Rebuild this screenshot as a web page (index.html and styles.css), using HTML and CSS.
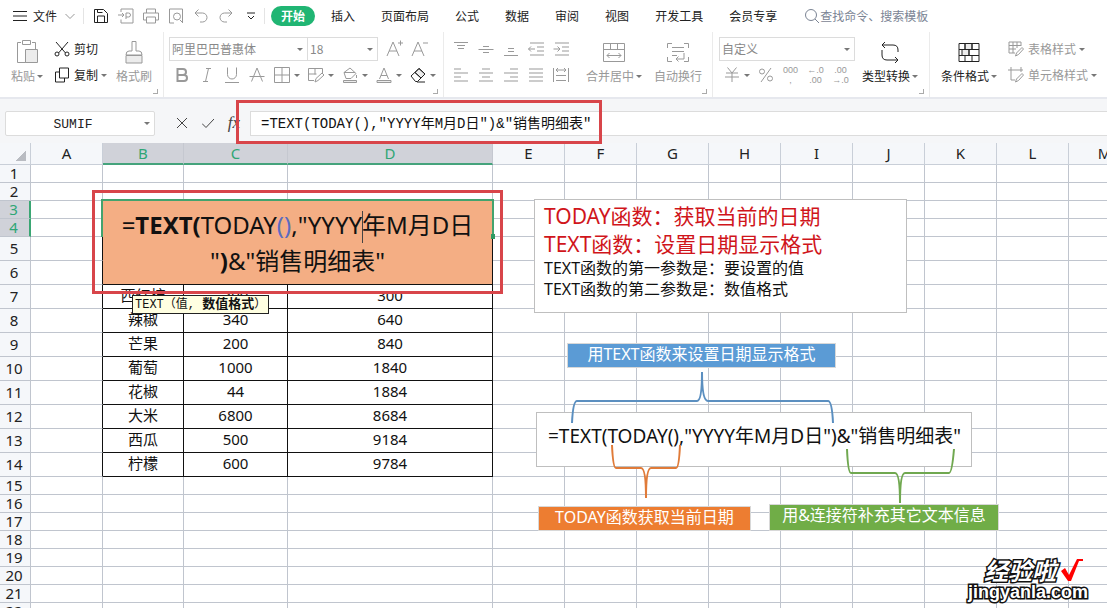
FILE: index.html
```html
<!DOCTYPE html>
<html lang="zh-CN">
<head>
<meta charset="utf-8">
<title>SUMIF</title>
<link rel="stylesheet" href="styles.css">
</head>
<body>
<div class="app">
  <header class="menubar">
    <button class="file-btn"><svg class="i16" viewBox="0 0 16 16"><path d="M1 3.500h14M1 8h14M1 12.500h14"/></svg><span>文件</span><svg class="i12 faded" viewBox="0 0 12 12"><path d="M1.500 4l4.500 4.500L10.500 4"/></svg></button>
    <div class="quick">
      <button aria-label="保存" class="dark"><svg class="i16" viewBox="0 0 16 16"><path d="M1.500 1.500h9l4 4v9h-13zM4.500 14V8h7v6M4.500 1.500V4.500h5"/></svg></button>
      <button aria-label="输出为PDF"><svg class="i16" viewBox="0 0 16 16"><path d="M3 4V1h12v14H3v-3.500M0 7h6M4 5l2 2-2 2M8 11V5h2.500a2 2 0 0 1 0 4H8"/></svg></button>
      <button aria-label="打印"><svg class="i16" viewBox="0 0 16 16"><path d="M3.500 5V1h9v4M3.500 12H.5V5h15v7h-3M3.500 9h9v6h-9z"/></svg></button>
      <button aria-label="打印预览"><svg class="i16" viewBox="0 0 16 16"><path d="M6 15H1.500V1h13v14M12 12l3 3"/><circle cx="9" cy="8.500" r="3.500"/></svg></button>
      <button aria-label="撤销"><svg class="i16" viewBox="0 0 16 16"><path d="M5.500 1.500L2 5l3.500 3.500M2 5h7.500a4.500 4.500 0 0 1 0 9H7"/></svg></button>
      <button aria-label="恢复"><svg class="i16" viewBox="0 0 16 16"><path d="M10.500 1.500L14 5l-3.500 3.500M14 5H6.500a4.500 4.500 0 0 0 0 9H9"/></svg></button>
      <button aria-label="更多" class="dark"><svg class="i12" viewBox="0 0 12 12"><path d="M2 3h8M3 6l3 3 3-3"/></svg></button>
    </div>
    <nav class="tabs">
      <button class="tab active">开始</button>
      <button class="tab">插入</button>
      <button class="tab">页面布局</button>
      <button class="tab">公式</button>
      <button class="tab">数据</button>
      <button class="tab">审阅</button>
      <button class="tab">视图</button>
      <button class="tab">开发工具</button>
      <button class="tab">会员专享</button>
    </nav>
    <label class="search"><svg class="i16" viewBox="0 0 16 16"><circle cx="7" cy="7" r="5.500"/><path d="M11 11l4 4"/></svg><input type="text" placeholder="查找命令、搜索模板"></label>
  </header>

  <div class="ribbon">
    <section class="group clipboard">
      <button class="big"><svg class="i28" viewBox="0 0 28 28"><path d="M8 4.500H4.500v20H13M19 4.500h3.500V11M9.500 2.500h8v4h-8z"/><path class="fill" d="M12.500 11.500h12v13h-12z"/></svg><span>粘贴<i class="caret"></i></span></button>
      <div class="stack">
        <button class="row-btn dark"><svg class="i16" viewBox="0 0 16 16"><path d="M2 1l9.500 11M14 1L4.500 12"/><circle cx="3" cy="13" r="2"/><circle cx="13" cy="13" r="2"/></svg>剪切</button>
        <button class="row-btn dark"><svg class="i16" viewBox="0 0 16 16"><path d="M5.500 1h9v10h-9zM5.500 5H1.500v10h9v-4"/></svg>复制<i class="caret"></i></button>
      </div>
      <button class="big"><svg class="i28" viewBox="0 0 28 28"><path d="M12 13V3.500h4V13h3q3 0 3 4H6q0-4 3-4z"/><path class="fill" d="M6 17.500h16v7.500H6z"/></svg><span>格式刷</span></button>
      <i class="launcher"></i>
    </section>

    <section class="group font">
      <div class="line">
        <div class="combo font-name"><select aria-label="字体"><option>阿里巴巴普惠体</option></select><i class="caret"></i></div>
        <div class="combo font-size"><select aria-label="字号"><option>18</option></select><i class="caret"></i></div>
        <button class="ico first" aria-label="增大字号"><svg class="i18" viewBox="0 0 18 18"><path d="M2 16L8 2l6 14M4 11h8M13 3h5M15.500.5v5"/></svg></button>
        <button class="ico" aria-label="减小字号"><svg class="i18" viewBox="0 0 18 18"><path d="M2 16L8 2l6 14M4 11h8M13 3h5"/></svg></button>
      </div>
      <div class="line">
        <button class="ico" aria-label="加粗"><svg class="i18" viewBox="0 0 18 18"><path stroke-width="2" d="M4.500 3h5.500a3 3 0 0 1 0 6H4.500zM4.500 9h6.500a3 3 0 0 1 0 6H4.500z"/></svg></button>
        <button class="ico" aria-label="倾斜"><svg class="i18" viewBox="0 0 18 18"><path d="M8 2.500h5M5 15.500h5M10.500 2.500l-3 13"/></svg></button>
        <button class="ico" aria-label="下划线"><svg class="i18" viewBox="0 0 18 18"><path d="M4.500 1.500v7a4.500 4.500 0 0 0 9 0v-7M2 16.500h14"/></svg></button>
        <button class="ico" aria-label="删除线"><svg class="i18" viewBox="0 0 18 18"><path d="M3.500 15.500L9 2l5.500 13.500M1.500 10.500h15"/></svg></button>
        <button class="split" aria-label="边框"><svg class="i18" viewBox="0 0 18 18"><path d="M1.500 1.500h15v15h-15zM9 1.500v15M1.500 9h15"/></svg><i class="caret"></i></button>
        <button class="split" aria-label="绘图边框"><svg class="i18" viewBox="0 0 18 18"><path d="M7 14.500H1.500v-12h14V7M1.500 8h8M8 2.500v6M8 16l1-3.500L15 7l2 2-6 5.500z"/></svg><i class="caret"></i></button>
        <button class="split" aria-label="填充颜色"><svg class="i18" viewBox="0 0 18 18"><path d="M3 6.500L9 2l6 5.500-5 5H5zM3 6.500h11M15.500 9v3"/><path class="fill" d="M2.500 14.500h13v2h-13z"/></svg><i class="caret"></i></button>
        <button class="split" aria-label="字体颜色"><svg class="i18" viewBox="0 0 18 18"><path d="M4.500 13L9 2l4.500 11M6 9.500h6"/><path class="fill" d="M2 14.500h14v2H2z"/></svg><i class="caret"></i></button>
        <button class="split dark" aria-label="清除"><svg class="i18" viewBox="0 0 18 18"><path class="fill" d="M6 6.500L10 2.500 16 8l-4 4z"/><path d="M2 10l8-7.500L16 8l-7.500 7.500H6.500zM6 6.500l6 5.500M8 16h8"/></svg><i class="caret"></i></button>
      </div>
      <i class="launcher"></i>
    </section>

    <section class="group align">
      <div class="stack">
        <div class="line">
          <button class="ico" aria-label="顶端对齐"><svg class="i18" viewBox="0 0 18 18"><path d="M2 2.500h14M5 5.500h8M6 8.500h6"/></svg></button>
          <button class="ico" aria-label="垂直居中"><svg class="i18" viewBox="0 0 18 18"><path d="M6 6.500h6M1.500 9.500h15M6 12.500h6"/></svg></button>
          <button class="ico" aria-label="底端对齐"><svg class="i18" viewBox="0 0 18 18"><path d="M6 8.500h6M6 11.500h6M2 15.500h14"/></svg></button>
          <button class="ico" aria-label="减少缩进"><svg class="i18" viewBox="0 0 18 18"><path d="M3 3h14M10 7h7M10 11h7M3 15h14M1.500 9H8M4 6.500L1.500 9 4 11.500"/></svg></button>
          <button class="ico" aria-label="增加缩进"><svg class="i18" viewBox="0 0 18 18"><path d="M3 3h14M10 7h7M10 11h7M3 15h14M1.500 9H8M5.500 6.500L8 9l-2.500 2.500"/></svg></button>
        </div>
        <div class="line">
          <button class="ico" aria-label="左对齐"><svg class="i18" viewBox="0 0 18 18"><path d="M2 3h7M2 7h14M2 11h7M2 15h14"/></svg></button>
          <button class="ico" aria-label="居中"><svg class="i18" viewBox="0 0 18 18"><path d="M5 3h8M2 7h14M5 11h8M2 15h14"/></svg></button>
          <button class="ico" aria-label="右对齐"><svg class="i18" viewBox="0 0 18 18"><path d="M8 3h8M2 7h14M8 11h8M2 15h14"/></svg></button>
          <button class="ico" aria-label="两端对齐"><svg class="i18" viewBox="0 0 18 18"><path d="M2 3h14M2 7h14M2 11h14M2 15h14"/></svg></button>
          <button class="ico" aria-label="分散对齐"><svg class="i18" viewBox="0 0 18 18"><path d="M1.500 2v14M16.500 2v14M4 4h10M6 2L4 4l2 2M12 2l2 2-2 2M4 9.500h10M4 14.500h10"/></svg></button>
        </div>
      </div>
      <button class="big"><svg class="i28" viewBox="0 0 28 28"><path d="M3.500 5.500h21v18h-21zM3.500 11.500h21M10.500 5.500v6M17.500 5.500v6M7 17.500h14M9.500 15L7 17.500 9.500 20M18.500 15l2.500 2.500-2.500 2.500"/></svg><span>合并居中<i class="caret"></i></span></button>
      <button class="big wrap"><svg class="i28" viewBox="0 0 28 28"><path d="M8 5.500H3.500V10M20 5.500h4.500V10M3.500 19v4.500H8M24.500 19v4.500H20M8 9.500h12M8 13.500h12M8 17.500h5M20 15v6h-8M14.500 18.500L12 21l2.500 2.500"/></svg><span>自动换行</span></button>
      <i class="launcher"></i>
    </section>

    <section class="group number">
      <div class="stack">
        <div class="combo format"><select aria-label="数字格式"><option>自定义</option></select><i class="caret"></i></div>
        <div class="line">
          <button class="split" aria-label="货币"><svg class="i18" viewBox="0 0 18 18"><path d="M4.500 1.500L9 7l4.500-5.500M3 7h12M2 11h14M9 7v9"/></svg><i class="caret"></i></button>
          <button class="ico" aria-label="百分比"><svg class="i18" viewBox="0 0 18 18"><path d="M14 2L4 16"/><circle cx="5" cy="5.500" r="2.500"/><circle cx="13" cy="12.500" r="2.500"/></svg></button>
          <button class="ico digits"><span>000</span><span>,</span></button>
          <button class="ico digits"><span>←.0</span><span>.00</span></button>
          <button class="ico digits"><span>.00</span><span>→.0</span></button>
        </div>
      </div>
      <button class="big dark"><svg class="i28" viewBox="0 0 28 28"><path d="M9 4L6 7l3 3M6 7h11q5 0 5 5v2M6 12v5q0 5 5 5h11M19 19l3 3-3 3"/></svg><span>类型转换<i class="caret"></i></span></button>
      <i class="launcher"></i>
    </section>

    <section class="group styles">
      <button class="big dark"><svg class="i28" viewBox="0 0 28 28"><path class="fill" d="M10 5.500h7v6h-7zM7 11.500h7v6H7z"/><path d="M4 5.500h20v18H4zM4 11.500h20M4 17.500h20M10 5.500v6M17 5.500v6M14 11.500v6M10 17.500v6M17 17.500v6"/></svg><span>条件格式<i class="caret"></i></span></button>
      <div class="stack">
        <button class="row-btn"><svg class="i16" viewBox="0 0 16 16"><path d="M7 12H1V1h12v4M1 4.500h12M1 8h7M5 1v11M9 1v6M7.500 15l1-3L14 6.500l1.500 1.500L10.500 13.500z"/></svg>表格样式<i class="caret"></i></button>
        <button class="row-btn"><svg class="i16" viewBox="0 0 16 16"><path d="M0 3h15M3 0v13h4M13 0v5M7.500 15l1-3L14 6.500l1.500 1.500L10.500 13.500z"/></svg>单元格样式<i class="caret"></i></button>
      </div>
    </section>
  </div>

  <div class="formula-bar">
    <div class="combo name-box"><input type="text" aria-label="名称框" value="SUMIF"><i class="caret"></i></div>
    <div class="formula-actions">
      <button aria-label="取消"><svg class="i12" viewBox="0 0 12 12"><path d="M1 1l10 10M11 1L1 11"/></svg></button>
      <button aria-label="确认"><svg class="i12" viewBox="0 0 12 12"><path d="M0 6.500l4 4L12 2"/></svg></button>
      <button class="fx" aria-label="插入函数">fx</button>
    </div>
    <input class="formula" type="text" aria-label="编辑栏" value="=TEXT(TODAY(),&quot;YYYY年M月D日&quot;)&amp;&quot;销售明细表&quot;">
    <div class="mark mark-formula"></div>
  </div>

  <main class="sheet">
    <table class="grid">
      <colgroup><col class="c-head"><col class="c-std"><col class="c-b"><col class="c-c"><col class="c-d"><col class="c-std" span="8"><col></colgroup>
      <thead><tr id="letters"></tr></thead>
      <tbody id="rows"></tbody>
    </table>
    <div class="selection"><i class="handle"></i></div>
    <div class="mark mark-title"></div>
    <div class="tip">TEXT（值, <b>数值格式</b>）</div>

    <div class="note note-help">
      <p class="lead">TODAY函数：获取当前的日期</p>
      <p class="lead">TEXT函数：设置日期显示格式</p>
      <p>TEXT函数的第一参数是：要设置的值</p>
      <p>TEXT函数的第二参数是：数值格式</p>
    </div>
    <div class="note note-formula">=TEXT(TODAY(),"YYYY年M月D日")&amp;"销售明细表"</div>
    <div class="label blue">用TEXT函数来设置日期显示格式</div>
    <div class="label orange">TODAY函数获取当前日期</div>
    <div class="label green">用&amp;连接符补充其它文本信息</div>
    <svg class="braces" viewBox="0 143 1000 400">
      <path stroke="#5b8fc0" d="M572 423Q573 401 577 401H697Q702 401 702 372Q702 401 708 401H828Q832 401 833 423"/>
      <path stroke="#e07b39" d="M612 445Q613 468 616 468H641Q646 468 646 498Q646 468 651 468H676Q679 468 680 445"/>
      <path stroke="#70a850" d="M847 449Q848 473 851 473H895Q900 473 900 503Q900 473 905 473H949Q952 473 954 449"/>
    </svg>
    <div class="watermark">
      <div class="brand">经验啦<svg viewBox="0 0 24 24"><path d="M1 13l4-3 4 7L17 1h6v2h-4L11 23H8z"/></svg></div>
      <div class="site">jingyanla.com</div>
    </div>
  </main>
</div>
<script src="sheet.js"></script>
</body>
</html>
```
FILE: styles.css
```css
* { box-sizing: border-box; }
body { margin: 0; overflow: hidden; font: 12px/16px "Noto Sans CJK SC", sans-serif; color: #222; background: #fff; }
button, input, select { font: inherit; color: inherit; border: 0; padding: 0; margin: 0; background: none; outline: 0; }
button { display: flex; align-items: center; justify-content: center; white-space: nowrap; }
select { appearance: none; width: 100%; }
p { margin: 0; }
svg { fill: none; stroke: currentColor; stroke-width: 1; flex: none; }
.fill { fill: #ececec; }
.i12 { width: 12px; height: 12px; }
.i16 { width: 16px; height: 16px; }
.i18 { width: 18px; height: 18px; }
.i28 { width: 28px; height: 28px; }
.faded { color: #999; }
.dark { color: #222; }
.caret { display: inline-block; flex: none; border: 3px solid transparent; border-top-color: #777; border-bottom: 0; }
.app { height: 100vh; display: flex; flex-direction: column; overflow: hidden; }

.menubar { display: flex; align-items: center; height: 32px; padding-left: 12px; flex: none; }
.file-btn { gap: 5px; padding-right: 7px; border-right: 1px solid #e4e4e4; }
.file-btn .i12 { margin-left: 2px; }
.quick { display: flex; padding: 0 1px 0 4px; margin-right: 6px; border-right: 1px solid #e4e4e4; color: #999; }
.quick button { width: 25px; height: 16px; }
.tabs { display: flex; gap: 6px; }
.tab { height: 20px; padding: 0 10px; border-radius: 10px; }
.tab.active { background: #20b573; color: #fff; font-weight: 700; }
.search { display: flex; align-items: center; flex: 1; padding-left: 17px; color: #7b8494; }
.search input { flex: 1; min-width: 0; }
.search input::placeholder { color: #7b8494; opacity: 1; }

.ribbon { display: flex; flex: none; height: 67px; color: #999; border-bottom: 2px solid #e6e8ee; }
.group { position: relative; display: flex; border-right: 1px solid #ebebeb; flex: none; }
.group:last-child { border-right: 0; }
.line { display: flex; align-items: center; height: 26px; }
.stack { display: flex; flex-direction: column; }
.big { flex-direction: column; justify-content: flex-start; padding-top: 2px; }
.big span { display: flex; align-items: center; line-height: 20px; }
.big .caret { margin-left: 2px; }
.row-btn { height: 26px; gap: 4px; justify-content: flex-start; }
.row-btn .caret { margin-left: -1px; }
.launcher { position: absolute; right: 5px; bottom: 3px; width: 5px; height: 5px; border: solid #aaa; border-width: 0 1px 1px 0; }
.ico { width: 25px; height: 26px; }
.split { width: 34px; height: 26px; gap: 3px; }
.combo { display: flex; align-items: center; height: 24px; border: 1px solid #dcdcdc; padding: 0 4px 0 2px; color: #888; }
.clipboard { width: 164px; padding: 4px 0 0 9px; gap: 9px; }
.clipboard > .big { width: 36px; }
.clipboard .stack { width: 53px; }
.font { width: 280px; flex-direction: column; padding: 4px 0 0 5px; }
.font-name { width: 139px; }
.font-size { width: 70px; border-left: 0; }
.ico.first { margin-left: 3px; }
.align { width: 269px; padding: 4px 0 0 4px; }
.align > .big { width: 56px; margin-left: 13px; }
.align > .wrap { width: 48px; margin-left: 12px; }
.number { width: 217px; padding: 4px 0 0 6px; }
.number .stack { width: 136px; padding-top: 1px; }
.number .line { height: 26px; margin-top: 1px; }
.number > .big { margin-left: 7px; width: 56px; }
.digits { flex-direction: column; font: 9px/10px "Liberation Sans", sans-serif; }
.styles { padding: 4px 0 0 11px; gap: 11px; }
.styles > .big { width: 56px; }

.formula-bar { position: relative; display: flex; align-items: center; flex: none; height: 44px; padding: 4px 0 0 5px; background: #f5f6f8; }
.name-box { width: 150px; height: 25px; background: #fff; border-radius: 2px; }
.name-box input { flex: 1; min-width: 0; height: 20px; padding: 2px 6px 0 0; text-align: center; font: 13px/16px "Liberation Mono", "Noto Sans CJK SC", monospace; color: #222; }
.formula-actions { display: flex; width: 95px; padding-left: 14px; color: #444; }
.formula-actions button { width: 26px; height: 24px; }
.fx { font: italic 17px/20px "Liberation Serif", serif; }
.formula { flex: 1; min-width: 0; height: 25px; padding: 0 0 3px 10px; background: #fff; border: 1px solid #dcdcdc; border-right: 0; font: 14px/20px "Liberation Mono", "Noto Sans CJK SC", monospace; color: #111; }
.mark { position: absolute; border: 3px solid #d8454a; pointer-events: none; }
.mark-formula { left: 236px; top: 1px; width: 366px; height: 44px; z-index: 2; }

.sheet { position: relative; flex: 1; min-height: 0; overflow: hidden; font-family: "Noto Sans", "Noto Sans CJK SC", sans-serif; }
.grid { width: 100%; min-width: 1141px; table-layout: fixed; border-spacing: 0; font-size: 15px; line-height: 17px; text-align: center; }
.grid th, .grid td { padding: 0; font-weight: 400; border: solid #c0c5ce; border-width: 0 1px 1px 0; white-space: nowrap; }
.grid th { background: #f5f7fa; }
.grid thead th { height: 22px; border-color: #c9cfd8; }
.grid tbody th { padding-right: 2px; }
.grid thead .on { background: #d0d2d9; color: #2fa675; border-right-color: #c5c8d0; border-bottom: 2px solid #45a37c; }
.grid tbody .on { background: #d0d2d9; color: #2fa675; border-right: 2px solid #3aa673; }
.grid thead .corner { background: linear-gradient(135deg, #f5f7fa 50%, #b9bcc2 50%) 15px 7px / 11px 11px no-repeat #f5f7fa; }
.c-head { width: 31px; }
.c-std { width: 72px; }
.c-b { width: 81px; }
.c-c { width: 104px; }
.c-d { width: 205px; }
.h18 { height: 18px; }
.h24 { height: 24px; }
.grid .edge { border-right-color: #111; }
.grid .data { padding-bottom: 2px; border-color: #111; color: #111; }
.grid .title { background: #f4ae84; font-size: 24px; line-height: 36px; color: #111; border-color: #111; }
.title .paren { color: #5b6bc0; }
.title .cursor { display: inline-block; width: 1px; height: 32px; margin: -4px -1px -4px 0; background: #444; vertical-align: middle; }
.selection { position: absolute; left: 101px; top: 56px; width: 393px; height: 38px; border: 2px solid #43a36e; border-bottom: 0; }
.handle { position: absolute; right: -3px; bottom: -2px; width: 4px; height: 5px; background: #2f9a62; }
.mark-title { left: 92px; top: 47px; width: 411px; height: 104px; }
.tip { position: absolute; left: 132px; top: 152px; width: 137px; height: 19px; padding-left: 2px; background: #ffffe1; border: 1px solid #222; font: 12px/17px "Liberation Mono", "Noto Sans CJK SC", monospace; color: #111; white-space: nowrap; }
.tip b { font-size: 13px; }
.note { position: absolute; background: #fff; border: 1px solid #bfbfbf; color: #111; white-space: nowrap; }
.note-help { left: 534px; top: 56px; width: 373px; height: 114px; padding: 2px 9px; font-size: 16px; line-height: 21px; }
.note-help .lead { font-size: 21px; line-height: 28px; color: #d0151b; }
.note-formula { left: 536px; top: 269px; width: 436px; height: 55px; padding-left: 11px; font-size: 19px; line-height: 47px; }
.label { position: absolute; color: #fff; font-size: 16px; line-height: 20px; text-align: center; white-space: nowrap; border: 1px solid #d8d8d8; }
.blue { left: 567px; top: 200px; width: 269px; height: 25px; background: #5b9bd5; }
.orange { left: 538px; top: 363px; width: 213px; height: 25px; background: #ed7d31; }
.green { left: 769px; top: 361px; width: 230px; height: 27px; background: #70ad47; }
.braces { position: absolute; left: 0; top: 0; width: 1000px; height: 400px; stroke-width: 2; }
.watermark { position: absolute; left: 968px; top: 414px; width: 130px; color: #fff; -webkit-text-stroke: 3px #111; paint-order: stroke fill; }
.brand { display: flex; align-items: center; gap: 4px; padding-left: 16px; font: italic 700 24px/26px "Noto Sans CJK SC", sans-serif; }
.brand svg { width: 24px; height: 24px; fill: #f00; stroke: none; }
.site { font: 700 18px/18px "Liberation Sans", sans-serif; }
```
FILE: sheet.js
```js
const letters = ['A', 'B', 'C', 'D', 'E', 'F', 'G', 'H', 'I', 'J', 'K', 'L', 'M'];
const data = {
  7: ['西红柿', 300, 300],
  8: ['辣椒', 340, 640],
  9: ['芒果', 200, 840],
  10: ['葡萄', 1000, 1840],
  11: ['花椒', 44, 1884],
  12: ['大米', 6800, 8684],
  13: ['西瓜', 500, 9184],
  14: ['柠檬', 600, 9784]
};
const title = '=<b>TEXT(</b>TODAY<span class="paren">()</span>,"YYYY<i class="cursor"></i>年M月D日<br>"<b>)</b>&amp;"销售明细表"';

document.getElementById('letters').innerHTML = '<th class="corner"></th>' +
  letters.map(l => `<th class="${'BCD'.includes(l) ? 'on' : ''}">${l}</th>`).join('');

let html = '';
for (let r = 1; r <= 22; r++) {
  const tall = r >= 5 && r <= 14;
  html += `<tr class="${tall ? 'h24' : 'h18'}"><th class="${r === 3 || r === 4 ? 'on' : ''}">${r}</th>`;
  letters.forEach((l, i) => {
    const inTable = i >= 1 && i <= 3;
    if (inTable && r === 3 && i === 1) html += `<td class="title" colspan="3" rowspan="4">${title}</td>`;
    else if (inTable && r >= 3 && r <= 6) return;
    else if (inTable && data[r]) html += `<td class="data">${data[r][i - 1]}</td>`;
    else html += `<td class="${i === 0 && r >= 3 && r <= 14 ? 'edge' : ''}"></td>`;
  });
  html += '</tr>';
}
document.getElementById('rows').innerHTML = html;
```
